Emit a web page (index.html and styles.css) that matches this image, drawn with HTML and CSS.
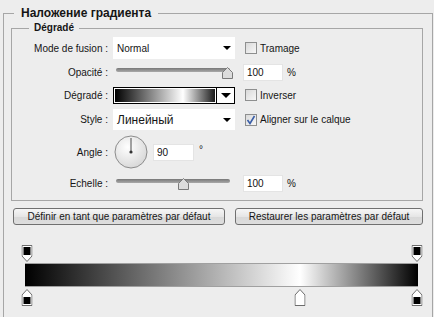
FILE: index.html
```html
<!DOCTYPE html>
<html lang="fr">
<head>
  <meta charset="UTF-8" />
  <title>Наложение градиента</title>
  <link rel="stylesheet" href="styles.css">
</head>
<body>
  <fieldset class="group">
    <legend class="group-title">Наложение градиента</legend>

    <fieldset class="sub">
      <legend class="sub-title">Dégradé</legend>

      <!-- Mode de fusion -->
      <div class="row h22">
        <label class="lbl">Mode de fusion :</label>
        <div class="select"><span>Normal</span><i class="arrow"></i></div>
        <span class="check"></span><span class="check-text">Tramage</span>
      </div>

      <!-- Opacité -->
      <div class="row h17">
        <label class="lbl">Opacité :</label>
        <div class="slider">
          <div class="track"></div>
          <svg class="thumb" style="left:106px" width="11" height="12" viewBox="0 0 11 12"><path d="M0.5 11.5V5.5L5.5 0.5L10.5 5.5V11.5Z" fill="#dcdcdc" stroke="#7a7a7a"/></svg>
        </div>
        <input class="num" value="100">
        <span class="unit">%</span>
      </div>

      <!-- Dégradé -->
      <div class="row h18">
        <label class="lbl">Dégradé :</label>
        <div class="grad-pick">
          <span class="grad-swatch"></span>
          <span class="grad-btn"><i class="arrow big"></i></span>
        </div>
        <span class="check"></span><span class="check-text">Inverser</span>
      </div>

      <!-- Style -->
      <div class="row h21">
        <label class="lbl">Style :</label>
        <div class="select"><span class="big-text">Линейный</span><i class="arrow"></i></div>
        <span class="check">
          <svg width="10" height="10" viewBox="0 0 10 10"><path d="M1.5 5L4 8.5L8.5 1" fill="none" stroke="#3a5ea8" stroke-width="1.6"/></svg>
        </span><span class="check-text">Aligner sur le calque</span>
      </div>

      <!-- Angle -->
      <div class="row h34">
        <label class="lbl">Angle :</label>
        <svg class="dial" width="34" height="34" viewBox="0 0 34 34">
          <defs>
            <radialGradient id="dialFill" cx="40%" cy="35%" r="70%">
              <stop offset="0" stop-color="#ffffff"/>
              <stop offset="1" stop-color="#d6d6d6"/>
            </radialGradient>
          </defs>
          <circle cx="17" cy="17" r="16" fill="url(#dialFill)" stroke="#8c8c8c"/>
          <line x1="17" y1="17" x2="17" y2="3" stroke="#4a4a4a"/>
          <circle cx="17" cy="17" r="1.6" fill="#333"/>
        </svg>
        <input class="num angle" value="90">
        <span class="unit deg">°</span>
      </div>

      <!-- Echelle -->
      <div class="row h18">
        <label class="lbl">Echelle :</label>
        <div class="slider">
          <div class="track"></div>
          <svg class="thumb" style="left:62px" width="11" height="12" viewBox="0 0 11 12"><path d="M0.5 11.5V5.5L5.5 0.5L10.5 5.5V11.5Z" fill="#dcdcdc" stroke="#7a7a7a"/></svg>
        </div>
        <input class="num" value="100">
        <span class="unit">%</span>
      </div>
    </fieldset>

    <div class="actions">
      <button class="btn wide">Définir en tant que paramètres par défaut</button>
      <button class="btn">Restaurer les paramètres par défaut</button>
    </div>

    <!-- Gradient editor -->
    <div class="editor">
      <div class="stops">
        <svg class="stop" style="left:0%" width="11" height="17" viewBox="0 0 11 17"><path d="M0.5 0.5H10.5V11L5.5 16.5L0.5 11Z" fill="#fff" stroke="#6c6c6c"/><rect x="2" y="2" width="7" height="8" fill="#000"/></svg>
        <svg class="stop" style="left:100%" width="11" height="17" viewBox="0 0 11 17"><path d="M0.5 0.5H10.5V11L5.5 16.5L0.5 11Z" fill="#fff" stroke="#6c6c6c"/><rect x="2" y="2" width="7" height="8" fill="#000"/></svg>
      </div>
      <div class="bar"></div>
      <div class="stops lower">
        <svg class="stop" style="left:0%" width="11" height="17" viewBox="0 0 11 17"><path d="M0.5 16.5V6L5.5 0.5L10.5 6V16.5Z" fill="#fff" stroke="#6c6c6c"/><rect x="2" y="8" width="7" height="7" fill="#000"/></svg>
        <svg class="stop" style="left:70%" width="11" height="17" viewBox="0 0 11 17"><path d="M0.5 16.5V6L5.5 0.5L10.5 6V16.5Z" fill="#fff" stroke="#6c6c6c"/><rect x="2" y="8" width="7" height="7" fill="#fff"/></svg>
        <svg class="stop" style="left:100%" width="11" height="17" viewBox="0 0 11 17"><path d="M0.5 16.5V6L5.5 0.5L10.5 6V16.5Z" fill="#fff" stroke="#6c6c6c"/><rect x="2" y="8" width="7" height="7" fill="#000"/></svg>
      </div>
    </div>
  </fieldset>
</body>
</html>
```

FILE: styles.css
```css
body {
  margin: 0;
  width: 434px;
  height: 317px;
  overflow: hidden;
  background: #ededed;
  font-family: "Liberation Sans", Arial, sans-serif;
  font-size: 10px;
  color: #151515;
}
.group {
  margin: 5px 1px 0 3px;
  padding: 0 9px 0 7px;
  border: 1px solid #a6a6a6;
  border-bottom: none;
  min-width: 0;
  height: 312px;
  box-sizing: border-box;
}
.group-title {
  margin-left: 3px;
  padding: 0 7px;
  font-size: 12px;
  font-weight: bold;
  line-height: 16px;
}
.sub {
  margin: 0;
  padding: 2px 0 8px 0;
  border: 1px solid #a6a6a6;
  min-width: 0;
}
.sub-title {
  margin-left: 17px;
  padding: 0 5px;
  font-weight: bold;
  line-height: 14px;
}
.row {
  display: flex;
  align-items: center;
  margin-top: 5px;
}
.row:first-of-type {
  margin-top: 0;
}
.h17 { height: 17px; }
.h18 { height: 18px; }
.h21 { height: 21px; }
.h22 { height: 22px; }
.h34 { height: 34px; }
.lbl {
  flex: none;
  width: 96px;
  margin-right: 5px;
  text-align: right;
}
.select {
  flex: none;
  width: 122px;
  height: 100%;
  box-sizing: border-box;
  padding: 0 4px;
  background: #fff;
  display: flex;
  align-items: center;
  justify-content: space-between;
}
.big-text {
  font-size: 12px;
}
.arrow {
  width: 0;
  height: 0;
  border-left: 4px solid transparent;
  border-right: 4px solid transparent;
  border-top: 4px solid #000;
}
.arrow.big {
  border-left-width: 5px;
  border-right-width: 5px;
  border-top-width: 5px;
}
.check {
  flex: none;
  width: 12px;
  height: 12px;
  box-sizing: border-box;
  margin-left: 10px;
  border: 1px solid #8e8f8f;
  background: linear-gradient(135deg, #d9d9d9, #f7f7f7);
  display: flex;
  align-items: center;
  justify-content: center;
}
.check-text {
  margin-left: 3px;
}
.slider {
  flex: none;
  position: relative;
  width: 117px;
  height: 17px;
  margin-left: 3px;
}
.track {
  margin: 4px 3px 0 0;
  height: 4px;
  border-radius: 2px;
  background: linear-gradient(#777, #a9a9a9);
}
.thumb {
  position: absolute;
  top: 3px;
}
.num {
  flex: none;
  width: 40px;
  height: 17px;
  box-sizing: border-box;
  margin: 0 0 0 10px;
  padding: 0 0 0 3px;
  border: 1px solid #e4e4e4;
  background: #fff;
  font: inherit;
  color: #111;
  outline: none;
}
.num.angle {
  width: 41px;
  margin-left: 5px;
}
.unit {
  margin-left: 4px;
}
.unit.deg {
  margin-left: 5px;
  align-self: flex-start;
  margin-top: 9px;
}
.grad-pick {
  flex: none;
  display: flex;
  width: 122px;
  height: 17px;
  box-sizing: border-box;
  border: 1px solid #000;
  background: #fff;
}
.grad-swatch {
  flex: 1;
  margin: 1px;
  background: linear-gradient(90deg, #000 0%, #fff 68%, #1a1a1a 100%);
}
.grad-btn {
  width: 17px;
  border-left: 1px solid #000;
  display: flex;
  align-items: center;
  justify-content: center;
}
.dial {
  flex: none;
  margin-left: 1px;
}
.actions {
  display: flex;
  gap: 10px;
  margin-top: 7px;
  padding-left: 2px;
}
.btn {
  flex: none;
  width: 188px;
  height: 17px;
  padding: 0;
  border: 1px solid #707070;
  border-radius: 3px;
  background: linear-gradient(#f6f6f6, #e6e6e6 50%, #d8d8d8 51%, #dedede);
  font: inherit;
  color: #151515;
}
.btn.wide {
  width: 212px;
}
.editor {
  margin: 20px 5px 0 14px;
}
.stops {
  position: relative;
  height: 17px;
  margin: 0 1px 0 2px;
}
.stops.lower {
  margin-top: 2px;
}
.stop {
  position: absolute;
  top: 0;
  transform: translateX(-50%);
}
.bar {
  height: 24px;
  margin-top: 1px;
  box-sizing: border-box;
  border-top: 1px solid #a0a0a0;
  border-bottom: 1px solid #a0a0a0;
  background: linear-gradient(90deg, #000 0%, #fff 70%, #000 100%);
}
```
